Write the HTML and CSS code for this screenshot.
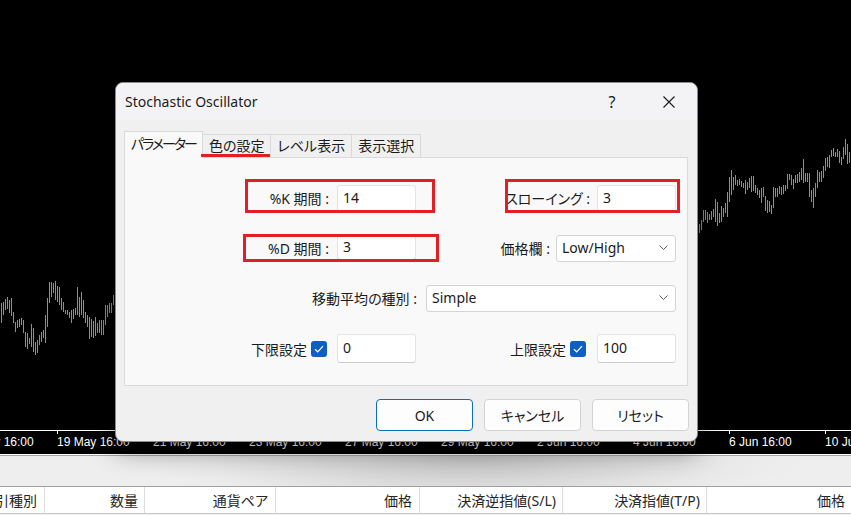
FILE: index.html
```html
<!doctype html>
<html lang="ja">
<head>
  <meta charset="utf-8"/>
  <title>Stochastic Oscillator</title>
  <link rel="stylesheet" href="styles.css">
</head>
<body>
  <!-- chart -->
  <div class="chart">
    <svg class="plot" width="851" height="454" viewBox="0 0 851 454">
      <path class="bars" d="M1.5 303V323M3.5 302V315M5.5 299V310M7.5 297V309M9.5 300V313M11.5 298V316M13.5 312V323M15.5 322V332M17.5 320V328M19.5 319V327M21.5 318V325M23.5 320V333M25.5 332V347M27.5 333V349M29.5 338V344M31.5 324V347M33.5 328V352M35.5 342V355M37.5 340V353M39.5 335V345M41.5 332V342M43.5 330V338M45.5 315V343M47.5 298V327M49.5 282V303M51.5 282V297M53.5 283V293M55.5 281V300M57.5 286V302M59.5 287V305M61.5 298V310M63.5 302V312M65.5 310V314M67.5 310V315M69.5 312V318M71.5 310V323M73.5 309V319M75.5 308V315M77.5 287V315M79.5 297V317M81.5 292V315M83.5 300V318M85.5 312V323M87.5 315V327M89.5 317V339M91.5 319V337M93.5 321V338M95.5 317V336M97.5 323V333M99.5 320V333M101.5 320V335M103.5 320V335M105.5 305V325M107.5 305V317M109.5 303V313M111.5 303V313M113.5 295V305"/>
      <path class="bars" d="M699.5 224V233M701.5 220V230M703.5 210V222M705.5 210V220M707.5 212V223M709.5 214V220M711.5 211V220M713.5 209V217M715.5 199V222M717.5 202V226M719.5 213V223M721.5 206V222M723.5 208V217M725.5 203V213M727.5 192V217M729.5 177V202M731.5 170V195M733.5 177V190M735.5 175V185M737.5 180V186M739.5 179V185M741.5 181V187M743.5 183V188M745.5 180V194M747.5 182V190M749.5 178V188M751.5 176V192M753.5 176V191M755.5 185V193M757.5 188V195M759.5 190V198M761.5 188V203M763.5 187V197M765.5 196V211M767.5 200V213M769.5 201V212M771.5 205V214M773.5 187V208M775.5 188V197M777.5 188V197M779.5 186V194M781.5 187V195M783.5 185V194M785.5 185V191M787.5 174V189M789.5 174V180M791.5 175V185M793.5 179V189M795.5 175V183M797.5 174V183M799.5 172V182M801.5 168V180M803.5 159V183M805.5 173V182M807.5 173V182M809.5 173V197M811.5 190V202M813.5 188V208M815.5 183V197M817.5 170V188M819.5 172V182M821.5 171V182M823.5 166V178M825.5 158V171M827.5 157V167M829.5 155V168M831.5 150V157M833.5 148V156M835.5 152V157M837.5 149V157M839.5 151V163M841.5 157V165M843.5 147V159M845.5 139V155M847.5 144V164M849.5 152V163"/>
      <path class="axis" d="M0 430.5H851M57.5 431V434M153.5 431V434M249.5 431V434M345.5 431V434M441.5 431V434M537.5 431V434M633.5 431V434M729.5 431V434M825.5 431V434"/>
      <g class="times">
        <text x="-39" y="446">17 May 16:00</text>
        <text x="57" y="446">19 May 16:00</text>
        <text x="153" y="446">21 May 16:00</text>
        <text x="249" y="446">23 May 16:00</text>
        <text x="345" y="446">27 May 16:00</text>
        <text x="441" y="446">29 May 16:00</text>
        <text x="537" y="446">2 Jun 16:00</text>
        <text x="633" y="446">4 Jun 16:00</text>
        <text x="729" y="446">6 Jun 16:00</text>
        <text x="825" y="446">10 Jun 16:00</text>
      </g>
    </svg>

    <!-- indicator dialog -->
    <div class="dialog">
      <div class="dialog-title">
        <span class="title-text">Stochastic Oscillator</span>
        <span class="title-btn">?</span>
        <span class="title-btn">
          <svg width="12" height="12" viewBox="0 0 12 12"><path d="M0.5 0.5L11.5 11.5M11.5 0.5L0.5 11.5" stroke="#1a1a1a" stroke-width="1.1" fill="none"/></svg>
        </span>
      </div>

      <div class="dialog-body">
        <div class="tabs">
          <div class="tab active">パラメーター</div>
          <div class="tab marked">色の設定</div>
          <div class="tab">レベル表示</div>
          <div class="tab">表示選択</div>
        </div>

        <div class="panel">
          <div class="row">
            <span class="label">%K 期間 :</span>
            <span class="field">14</span>
            <span class="label">スローイング :</span>
            <span class="field">3</span>
          </div>
          <div class="row">
            <span class="label">%D 期間 :</span>
            <span class="field focus">3</span>
            <span class="pair">
              <span>価格欄 :</span>
              <span class="field select price">Low/High
                <svg width="9" height="5" viewBox="0 0 9 5"><path d="M0.5 0.5L4.5 4.5L8.5 0.5" stroke="#5a5a5a" fill="none"/></svg>
              </span>
            </span>
          </div>
          <div class="row wide">
            <span>移動平均の種別 :</span>
            <span class="field select method">Simple
              <svg width="9" height="5" viewBox="0 0 9 5"><path d="M0.5 0.5L4.5 4.5L8.5 0.5" stroke="#5a5a5a" fill="none"/></svg>
            </span>
          </div>
          <div class="row">
            <span class="check-label">下限設定 <i class="check"><svg width="10" height="8" viewBox="0 0 10 8"><path d="M1 4.2L3.7 6.8L9 1.2" stroke="#fff" stroke-width="1.2" fill="none"/></svg></i></span>
            <span class="field tall">0</span>
            <span class="check-label right">上限設定 <i class="check"><svg width="10" height="8" viewBox="0 0 10 8"><path d="M1 4.2L3.7 6.8L9 1.2" stroke="#fff" stroke-width="1.2" fill="none"/></svg></i></span>
            <span class="field tall">100</span>
          </div>
        </div>

        <div class="dialog-buttons">
          <span class="btn primary">OK</span>
          <span class="btn">キャンセル</span>
          <span class="btn">リセット</span>
        </div>
      </div>

      <!-- red annotation frames -->
      <div class="frame f-k"></div>
      <div class="frame f-slow"></div>
      <div class="frame f-d"></div>
    </div>
  </div>

  <div class="dock-bar"></div>

  <div class="orders-head">
    <span class="cell c1">取引種別</span>
    <span class="cell c2">数量</span>
    <span class="cell c3">通貨ペア</span>
    <span class="cell c4">価格</span>
    <span class="cell c5">決済逆指値(S/L)</span>
    <span class="cell c6">決済指値(T/P)</span>
    <span class="cell c7">価格</span>
  </div>
</body>
</html>
```

FILE: styles.css
```css
*{box-sizing:border-box}
html,body{height:100%;overflow:hidden}
body{
  margin:0;
  background:#f0f0f0;
  color:#1b1b1b;
  font-family:"Noto Sans","Noto Sans CJK JP",sans-serif;
  font-size:14px;
  font-feature-settings:"palt";
}

/* ---------- chart ---------- */
.chart{position:relative;height:455px;background:#000;border-bottom:1px solid #fff}
.plot{display:block}
.bars{stroke:#2bd91c;stroke-width:1;fill:none;shape-rendering:crispEdges}
.axis{stroke:#fff;stroke-width:1;fill:none;shape-rendering:crispEdges}
.times text{font-family:"Liberation Sans",sans-serif;font-size:12px;fill:#fff}

/* ---------- dialog ---------- */
.dialog{
  position:absolute;
  left:115px;
  top:82px;
  width:583px;
  background:#f0f0f0;
  border:1px solid #8c8c8c;
  border-radius:8px;
  box-shadow:0 8px 26px rgba(0,0,0,.45);
  overflow:hidden;
}
.dialog-title{
  display:flex;
  align-items:center;
  height:37px;
  padding:0 5px 0 9px;
  background:#f3f3f6;
}
.title-text{flex:1}
.title-btn{width:46px;display:flex;justify-content:center;font-size:16px}
.title-btn + .title-btn{margin-left:11px}

.dialog-body{padding:11px 9px 10px 8px}

.tabs{display:flex;align-items:flex-end;height:27px;margin-bottom:-1px;position:relative;z-index:1}
.tab{
  position:relative;
  height:23px;
  margin:0 0 1px -1px;
  padding:0 6px;
  border:1px solid #d9d9d9;
  border-bottom:none;
  background:#f0f0f0;
  line-height:21px;
}
.tab.active{height:27px;margin:0;background:#f9f9f9;line-height:24px;letter-spacing:-2px}
.tab.marked::after{
  content:"";
  position:absolute;
  left:-2px;
  right:-1px;
  bottom:0;
  height:3px;
  background:#e31f26;
}

.panel{
  height:229px;
  padding:26px 11px 0 0;
  border:1px solid #dadada;
  background:#f9f9f9;
  display:flex;
  flex-direction:column;
  gap:22px;
}
.row{display:grid;grid-template-columns:212px 79px 181px 79px;height:28px;align-items:center}
.row .label{text-align:right;padding-right:8px;white-space:nowrap}
.row .label:nth-child(3){padding-right:7px}
.row.wide{display:flex;justify-content:flex-end;gap:9px}
.pair{grid-column:3 / 5;display:flex;justify-content:flex-end;align-items:center;gap:6px}

.field{
  height:27px;
  display:flex;
  align-items:center;
  padding:0 5px 2px;
  background:#fff;
  border:1px solid #e4e4e4;
  border-bottom-color:#cdcdcd;
  border-radius:3px;
}
.field.tall{height:29px}
.field.focus{height:26px;border-bottom:2px solid #0063c4}
.select{justify-content:space-between;padding-right:7px;border-color:#d4d4d4}
.price{width:120px}
.method{width:250px}

.check-label{display:flex;justify-content:flex-end;align-items:center;gap:4px;padding-right:10px;white-space:nowrap}
.check-label.right{padding-right:11px}
.check{
  width:16px;
  height:16px;
  display:flex;
  align-items:center;
  justify-content:center;
  background:#0f5fc2;
  border-radius:3px;
}

.dialog-buttons{display:flex;justify-content:flex-end;gap:11px;margin:13px -1px 0 0}
.btn{
  width:97px;
  height:32px;
  display:flex;
  align-items:center;
  justify-content:center;
  background:#fdfdfd;
  border:1px solid #d3d3d3;
  border-radius:4px;
}
.btn.primary{border-color:#0f6cbd}

/* red annotation frames */
.frame{position:absolute;border:3px solid #e31f26}
.f-k{left:129px;top:96px;width:190px;height:34px}
.f-slow{left:389px;top:96px;width:175px;height:34px}
.f-d{left:127px;top:151px;width:196px;height:28px}

/* ---------- terminal strip ---------- */
.dock-bar{
  height:31px;
  border-top:1px solid #a6a6a6;
  background:radial-gradient(ellipse 330px 60px at 470px 0,#c3c3c3,#e9e9e9 80%,#eeeeee);
}
.orders-head{
  display:flex;
  height:28px;
  background:#fff;
  border-top:1px solid #a0a0a0;
  border-bottom:1px solid #c8c8c8;
  color:#262626;
}
.cell{
  flex:none;
  display:flex;
  justify-content:flex-end;
  align-items:center;
  padding-right:7px;
  border-right:1px solid #dedede;
  overflow:hidden;
  white-space:nowrap;
}
.c1{width:45px}
.c2{width:100px;padding-right:6px}
.c3{width:131px}
.c4{width:144px}
.c5{width:143px;padding-right:6px}
.c6{width:144px;padding-right:6px}
.c7{flex:1;border-right:none;padding-right:6px}
```
